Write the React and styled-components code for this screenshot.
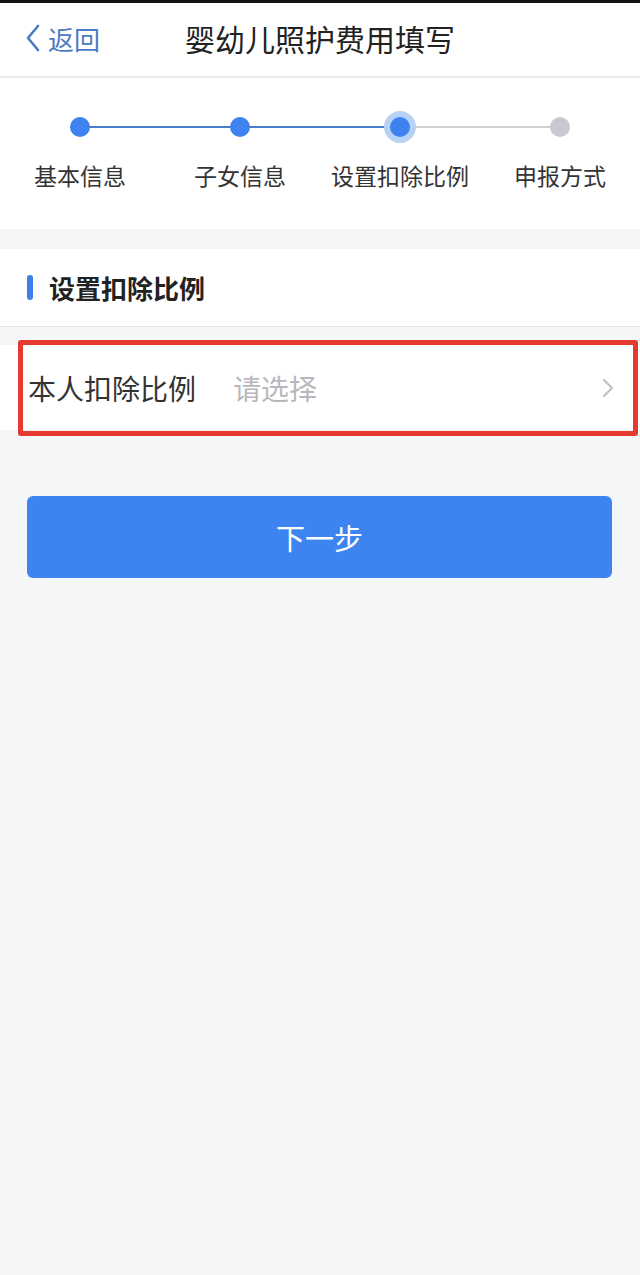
import React from "react";
import styled, { createGlobalStyle } from "styled-components";

const steps = [
  { label: "基本信息", state: "done" },
  { label: "子女信息", state: "done" },
  { label: "设置扣除比例", state: "active" },
  { label: "申报方式", state: "todo" },
];

const GlobalStyle = createGlobalStyle`
  html, body {
    margin: 0;
    padding: 0;
    background: #f5f6f8;
    font-family: "Noto Sans CJK SC", "Noto Sans", sans-serif;
  }
`;

const Page = styled.div`
  width: 640px;
  min-height: 1275px;
  background: #f5f6f8;
`;

const StatusStrip = styled.div`
  height: 3px;
  background: #111;
`;

const Header = styled.header`
  height: 73px;
  background: #fff;
  border-bottom: 2px solid #e8e9ed;
  display: grid;
  grid-template-columns: 140px 1fr 140px;
  align-items: center;
`;

const Back = styled.div`
  display: flex;
  align-items: center;
  gap: 7px;
  padding-left: 25px;
  margin-top: -3px;
  color: #4a7bc4;
  font-size: 26px;
  svg {
    width: 16px;
    height: 28px;
  }
`;

const Title = styled.h1`
  margin: -4px 0 0;
  text-align: center;
  font-size: 30px;
  font-weight: 400;
  color: #222;
`;

const Steps = styled.section`
  background: #fff;
  height: 151px;
  padding-top: 32px;
  box-sizing: border-box;
`;

const Track = styled.div`
  display: flex;
  align-items: center;
  padding: 0 63px;
  height: 34px;
`;

const DotWrap = styled.div`
  position: relative;
  z-index: 1;
  width: 34px;
  height: 34px;
  display: flex;
  align-items: center;
  justify-content: center;
  flex: none;
`;

const Dot = styled.span`
  width: 20px;
  height: 20px;
  border-radius: 50%;
  background: ${(p) => (p.state === "todo" ? "#c9c9d1" : "#3d82ee")};
  box-shadow: ${(p) =>
    p.state === "active" ? "0 0 0 6px #b6d3f5" : "none"};
`;

const Line = styled.span`
  flex: 1;
  height: 2px;
  margin: 0 -8px;
  background: ${(p) => (p.done ? "#4b7ec8" : "#cfcfd4")};
`;

const Labels = styled.div`
  display: grid;
  grid-template-columns: repeat(4, 1fr);
  margin-top: 14px;
`;

const Label = styled.div`
  text-align: center;
  font-size: 23px;
  color: #333;
`;

const SectionHead = styled.div`
  margin-top: 20px;
  height: 77px;
  background: #fff;
  border-bottom: 1px solid #e6e7eb;
  display: flex;
  align-items: center;
  gap: 16px;
  padding-left: 27px;
`;

const Bar = styled.span`
  width: 6px;
  height: 25px;
  border-radius: 3px;
  background: #3b7fe8;
`;

const SectionTitle = styled.h2`
  margin: 0;
  font-size: 26px;
  font-weight: 700;
  color: #222;
`;

const Row = styled.div`
  position: relative;
  margin-top: 18px;
  height: 85px;
  background: #fff;
  display: flex;
  align-items: center;
  padding: 0 26px 0 28px;
`;

const RowLabel = styled.span`
  font-size: 28px;
  color: #333;
  width: 205px;
`;

const Placeholder = styled.span`
  flex: 1;
  font-size: 28px;
  color: #b8b8bc;
`;

const Chevron = styled.svg`
  width: 12px;
  height: 20px;
`;

const Highlight = styled.div`
  position: absolute;
  top: -5px;
  bottom: -6px;
  left: 18px;
  right: 2px;
  border: 5px solid #e6392f;
  border-radius: 3px;
  pointer-events: none;
`;

const NextButton = styled.button`
  display: block;
  margin: 66px 28px 0 27px;
  width: 585px;
  height: 82px;
  border: none;
  border-radius: 6px;
  background: #3e84f0;
  color: #fff;
  font-family: inherit;
  font-size: 29px;
  cursor: pointer;
`;

export default function App() {
  return (
    <Page>
      <GlobalStyle />
      <StatusStrip />
      <Header>
        <Back>
          <svg viewBox="0 0 16 28" fill="none">
            <path d="M13 2 L3 14 L13 26" stroke="#4a7bc4" strokeWidth="2.6" strokeLinecap="round" strokeLinejoin="round" />
          </svg>
          返回
        </Back>
        <Title>婴幼儿照护费用填写</Title>
        <div />
      </Header>

      <Steps>
        <Track>
          {steps.map((s, i) => (
            <React.Fragment key={s.label}>
              <DotWrap>
                <Dot state={s.state} />
              </DotWrap>
              {i < steps.length - 1 && (
                <Line done={steps[i + 1].state !== "todo"} />
              )}
            </React.Fragment>
          ))}
        </Track>
        <Labels>
          {steps.map((s) => (
            <Label key={s.label}>{s.label}</Label>
          ))}
        </Labels>
      </Steps>

      <SectionHead>
        <Bar />
        <SectionTitle>设置扣除比例</SectionTitle>
      </SectionHead>

      <Row>
        <RowLabel>本人扣除比例</RowLabel>
        <Placeholder>请选择</Placeholder>
        <Chevron viewBox="0 0 12 20" fill="none">
          <path d="M2 2 L10 10 L2 18" stroke="#bdbdc2" strokeWidth="2" strokeLinecap="round" strokeLinejoin="round" />
        </Chevron>
        <Highlight />
      </Row>

      <NextButton>下一步</NextButton>
    </Page>
  );
}
